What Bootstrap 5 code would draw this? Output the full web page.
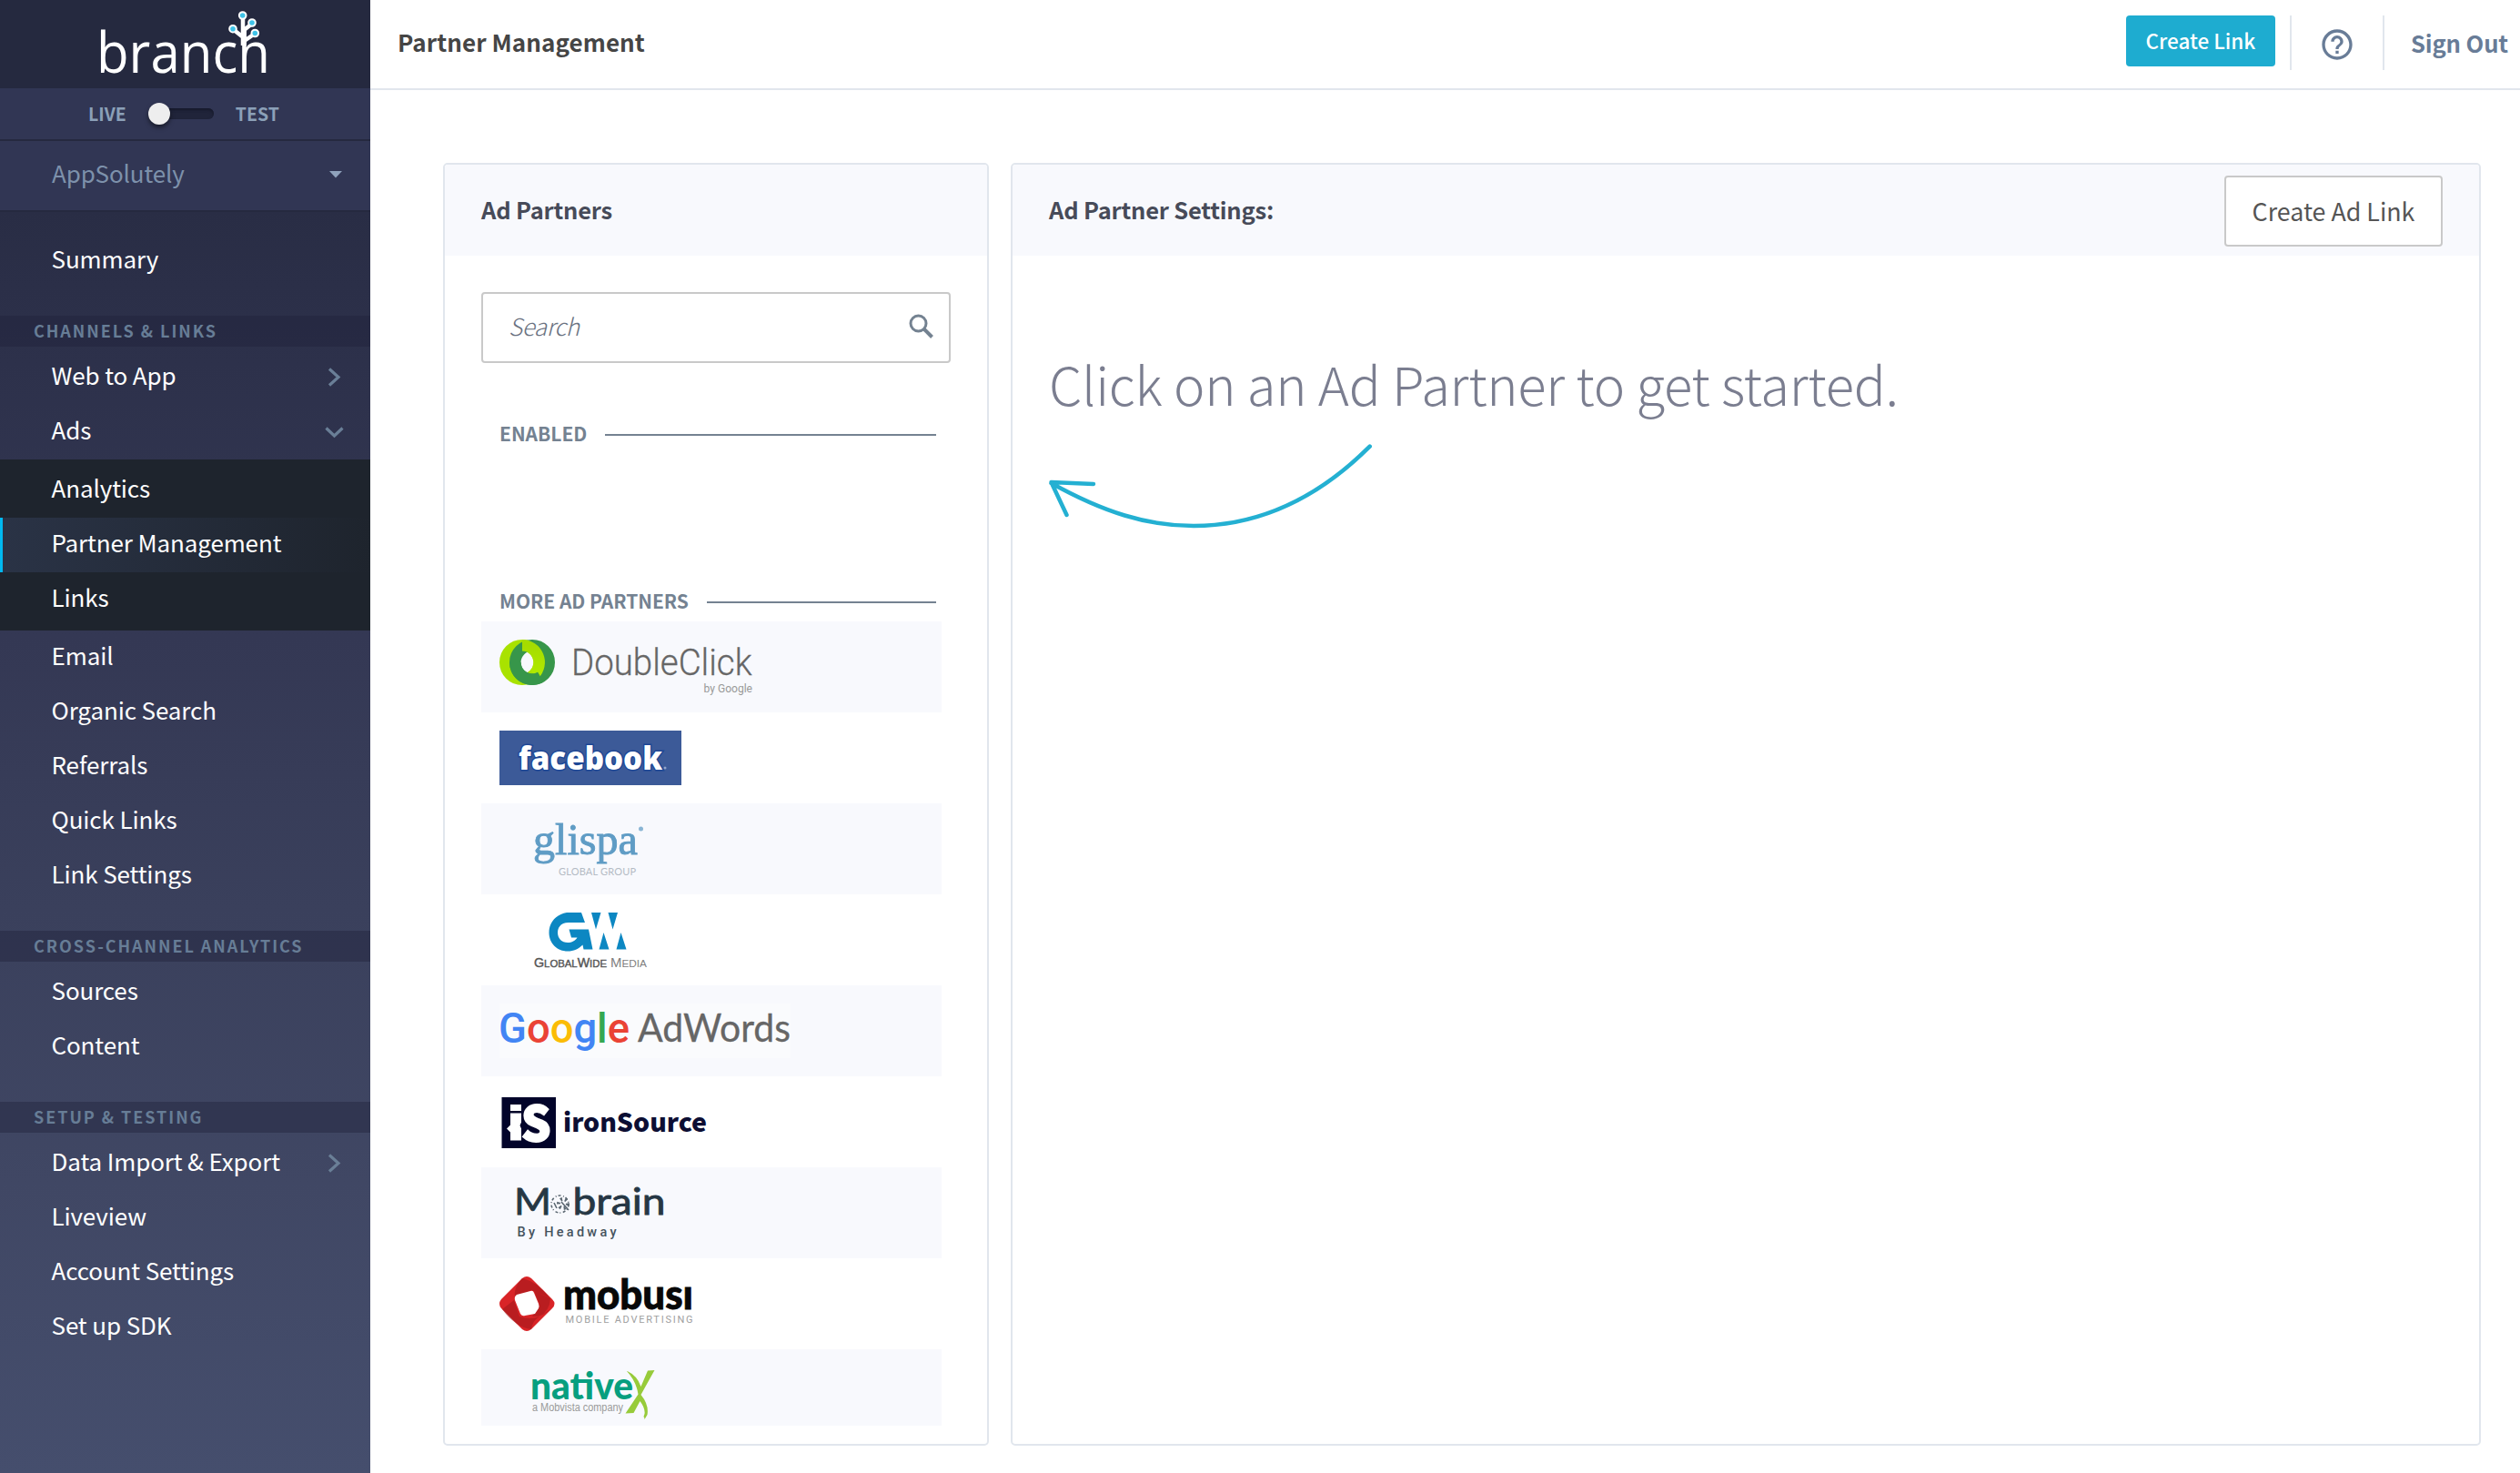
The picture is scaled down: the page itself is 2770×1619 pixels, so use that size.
<!DOCTYPE html>
<html lang="en">
<head>
<meta charset="utf-8">
<meta name="viewport" content="width=device-width, initial-scale=1">
<title>Partner Management</title>
<link href="https://cdn.jsdelivr.net/npm/bootstrap@5.3.0/dist/css/bootstrap.min.css" rel="stylesheet">
<script src="https://cdn.jsdelivr.net/npm/bootstrap@5.3.0/dist/js/bootstrap.bundle.min.js" defer></script>
<style>
body{font-family:"Noto Sans CJK SC","Open Sans",sans-serif;background:#fff;color:#454545;font-size:26px;min-height:1619px}
a{color:inherit;text-decoration:none}
svg{display:block;overflow:visible}
/* sidebar */
.sidebar{width:407px;height:1619px;background:linear-gradient(#25293f 0,#292d45 231px,#2d314b 400px,#343854 700px,#3a405c 1000px,#404764 1300px,#454e6d 1619px);color:#fff}
.brand-box{height:97px;background:#25293f}
.mode-row{height:58px;background:#313654;border-bottom:2px solid #25293f;color:#8ba0b8;font-size:19.5px;font-weight:700;padding-left:97px;line-height:55px}
.mode-switch{width:72px;height:12px;border-radius:6px;background:#20243a;box-shadow:inset 0 2px 3px #16192b;margin:22px 24px 0}
.mode-knob{width:24px;height:24px;border-radius:50%;background:#eee;margin-top:-6px;box-shadow:0 3px 5px rgba(0,0,0,.5)}
.app-row{height:78px;background:#313654;border-bottom:2px solid #25293f;color:#7d91ab;padding:0 31px 0 57px;line-height:70px;letter-spacing:-.15px}
.side-head{height:34px;background:rgba(32,34,58,.42);color:#677d96;font-size:18px;font-weight:700;letter-spacing:1.95px;padding-left:37px;line-height:32px}
.side-nav{padding:4px 0 30px}
.side-nav .nav-link{height:60px;line-height:54px;padding:0 30px 0 56.500px;color:#fff;display:flex;justify-content:space-between;letter-spacing:-.12px}
.side-nav .nav-link svg{margin-top:14px}
.nav-first{padding-top:24px}
.sub-nav{background:#1e242d;padding:4px 0}
.sub-nav .nav-link.active{background:linear-gradient(90deg,#2a3346,#1e242d);box-shadow:inset 3px 0 #00b9f1}
/* top bar */
.topbar{height:99px;border-bottom:2px solid #e1e6ed;padding:0 13px 0 30px}
.page-title{font-size:26px;font-weight:700;line-height:91px;letter-spacing:.08px;margin:0}
.btn-create{background:#1eacd0;color:#fff;width:164px;height:56px;border-radius:4px;font-size:22.5px;font-weight:500;line-height:50px;padding:0 0 3px;margin-top:17px}
.bar-rule{width:2px;height:60px;background:#e1e6ed;margin-top:17px}
.sign-out{color:#687c97;font-weight:700;font-size:25.6px;line-height:93px;letter-spacing:-.12px;padding-left:5px}
.help-icon{margin-top:29px}
/* panels */
.panels{padding:80px 43px 0 80px;gap:24px}
.panel{border:2px solid #e1e6ed;border-radius:5px;height:1410px;overflow:hidden;background:#fff}
.panel-left{width:600px}
.panel-head{background:#f8f9fd;height:100px;padding:0 40px;color:#474b59;font-weight:700;font-size:25.5px}
.panel-head span{line-height:97px;letter-spacing:-.2px}
.btn-ad{border:2px solid #c9c9c9;border-radius:4px;background:#fff;width:240px;height:78px;font-size:26.800px;color:#555;padding:0;line-height:70px;margin-top:12px}
.search-box{height:78px;border:2px solid #c9c9c9;border-radius:4px;margin:40px 40px 0;padding:0 14px 0 28px}
.search-box span{font-style:italic;font-weight:300;color:#6a7281;line-height:70px;letter-spacing:-.4px}
.search-box svg{margin-top:19px}
.group-head{color:#748291;font-size:21px;font-weight:700;height:32px;line-height:30px;padding:0 56px 0 60px;gap:20px}
.group-head i{height:2px;background:#748291;flex:1;margin-top:16px}
.group-head span{white-space:nowrap;letter-spacing:-.03px}
.group-on{margin-top:62px}
.group-more{margin-top:152px}
.partners{margin:6px 50px 0 40px;height:884px;overflow:hidden}
.partners .list-group-item{height:100px;border:0;border-radius:0;padding:20px 20px;background:#fff}
.partners .list-group-item:nth-child(odd){background:#f8f9fd}
.get-started{font-size:58px;font-weight:300;color:#7b7e90;letter-spacing:-.28px;line-height:84px;margin:98px 0 0 40px}
.hint-arrow{margin:22px 0 0 30px}
</style>
</head>
<body>
<div class="d-flex">
  <aside class="sidebar flex-shrink-0">
    <div class="brand-box">
      <svg width="407" height="97" viewBox="0 0 407 97">
        <text x="106" y="80" font-family="Open Sans" font-weight="400" font-size="62" fill="#fff" textLength="191" lengthAdjust="spacingAndGlyphs">branch</text>
        <g stroke="#fff" stroke-width="4.500" fill="none"><path d="M267 20V50M256 32l10 8M277 26l-10 8M280 37l-13 9"/></g>
        <g fill="#3fc3e8" stroke="#fff" stroke-width="2"><circle cx="266.700" cy="17" r="3.800"/><circle cx="277" cy="25" r="3.800"/><circle cx="256" cy="31.700" r="3.800"/><circle cx="280.300" cy="36.500" r="3.800"/></g>
      </svg>
    </div>
    <div class="mode-row d-flex"><span>LIVE</span><div class="mode-switch"><div class="mode-knob"></div></div><span>TEST</span></div>
    <div class="app-row d-flex justify-content-between"><span>AppSolutely</span><svg width="14" height="76" viewBox="0 0 14 76"><path d="M0 33h14l-7 7.500z" fill="#8fa2bc"/></svg></div>
    <nav class="side-nav nav-first nav flex-column flex-nowrap"><a class="nav-link" href="#">Summary</a></nav>
    <div class="side-head">CHANNELS &amp; LINKS</div>
    <nav class="side-nav nav flex-column flex-nowrap">
      <a class="nav-link" href="#">Web to App<svg width="20" height="30" viewBox="0 0 20 30"><path d="M5 6.500l10 9-10 9" fill="none" stroke="#6a7f97" stroke-width="3.200"/></svg></a>
      <a class="nav-link" href="#">Ads<svg width="20" height="30" viewBox="0 0 20 30"><path d="M1.500 11.500l9 8.500 9-8.500" fill="none" stroke="#6a7f97" stroke-width="3.200"/></svg></a>
      <div class="sub-nav">
        <a class="nav-link" href="#">Analytics</a>
        <a class="nav-link active" href="#">Partner Management</a>
        <a class="nav-link" href="#">Links</a>
      </div>
      <a class="nav-link" href="#">Email</a>
      <a class="nav-link" href="#">Organic Search</a>
      <a class="nav-link" href="#">Referrals</a>
      <a class="nav-link" href="#">Quick Links</a>
      <a class="nav-link" href="#">Link Settings</a>
    </nav>
    <div class="side-head">CROSS-CHANNEL ANALYTICS</div>
    <nav class="side-nav nav flex-column flex-nowrap">
      <a class="nav-link" href="#">Sources</a>
      <a class="nav-link" href="#">Content</a>
    </nav>
    <div class="side-head">SETUP &amp; TESTING</div>
    <nav class="side-nav nav flex-column flex-nowrap">
      <a class="nav-link" href="#">Data Import &amp; Export<svg width="20" height="30" viewBox="0 0 20 30"><path d="M5 6.500l10 9-10 9" fill="none" stroke="#6a7f97" stroke-width="3.200"/></svg></a>
      <a class="nav-link" href="#">Liveview</a>
      <a class="nav-link" href="#">Account Settings</a>
      <a class="nav-link" href="#">Set up SDK</a>
    </nav>
  </aside>

  <main class="flex-grow-1">
    <header class="topbar d-flex">
      <h1 class="page-title me-auto">Partner Management</h1>
      <button class="btn btn-create">Create Link</button>
      <div class="bar-rule ms-3 me-4"></div>
      <svg class="help-icon me-4" width="52" height="40" viewBox="-1 0 26 24" preserveAspectRatio="xMidYMid meet"><path fill="#687c97" d="M11 18h2v-2h-2v2zm1-16C6.480 2 2 6.480 2 12s4.480 10 10 10 10-4.480 10-10S17.520 2 12 2zm0 18c-4.410 0-8-3.590-8-8s3.590-8 8-8 8 3.590 8 8-3.590 8-8 8zm0-14c-2.210 0-4 1.790-4 4h2c0-1.100.9-2 2-2s2 .9 2 2c0 2-3 1.750-3 5h2c0-2.250 3-2.500 3-5 0-2.210-1.790-4-4-4z"/></svg>
      <div class="bar-rule me-4"></div>
      <a class="sign-out" href="#">Sign Out</a>
    </header>

    <div class="panels d-flex">
      <section class="panel panel-left flex-shrink-0">
        <div class="panel-head"><span>Ad Partners</span></div>
        <div class="search-box d-flex justify-content-between">
          <span>Search</span>
          <svg width="32" height="34" viewBox="0 0 32 34"><circle cx="12.500" cy="13.500" r="8.500" fill="none" stroke="#748291" stroke-width="3"/><path d="M18.500 19.500l9 9" stroke="#748291" stroke-width="4"/></svg>
        </div>
        <div class="group-head group-on d-flex"><span>ENABLED</span><i></i></div>
        <div class="group-head group-more d-flex"><span>MORE AD PARTNERS</span><i></i></div>
        <div class="partners list-group list-group-flush">
          <div class="list-group-item">
            <svg width="300" height="60" viewBox="0 0 300 60">
              <defs><linearGradient id="dcy" x1="0" y1="0" x2="0" y2="1"><stop offset="0" stop-color="#a5dc00"/><stop offset="1" stop-color="#b0ea00"/></linearGradient></defs>
              <circle cx="25" cy="25" r="18.700" fill="none" stroke="#a9e200" stroke-width="12.600"/>
              <circle cx="36" cy="25" r="18.700" fill="none" stroke="#37964a" stroke-width="12.600"/>
              <path d="M25 6.300A18.700 18.700 0 0 1 38.200 38.200" fill="none" stroke="url(#dcy)" stroke-width="12.600"/>
              <path d="M17.300 25A18.700 18.700 0 0 0 45.300 41.200" fill="none" stroke="#37964a" stroke-width="12.600"/>
              <text x="79" y="39" font-family="Roboto" font-weight="300" font-size="40" fill="#666" stroke="#666" stroke-width=".3" textLength="198.500" lengthAdjust="spacingAndGlyphs">DoubleClick</text>
              <text x="224.500" y="58" font-family="Roboto" font-weight="400" font-size="12.500" fill="#999" textLength="53.500" lengthAdjust="spacingAndGlyphs">by Google</text>
            </svg>
          </div>
          <div class="list-group-item">
            <svg width="300" height="60" viewBox="0 0 300 60">
              <path fill="#3c5a98" d="M0 0h200v60H0z"/>
              <text x="21" y="43" font-family="Open Sans" font-weight="800" font-size="34.500" fill="#fff" stroke="#1d4796" stroke-width="3" paint-order="stroke" textLength="158" lengthAdjust="spacingAndGlyphs">facebook</text>
              <circle cx="182" cy="41" r="1.500" fill="#8fa3cb"/>
            </svg>
          </div>
          <div class="list-group-item">
            <svg width="300" height="60" viewBox="0 0 300 60">
              <text x="37" y="35.500" font-family="Liberation Serif" font-size="49.500" fill="#5f9cc5" stroke="#5f9cc5" stroke-width=".9" textLength="115" lengthAdjust="spacingAndGlyphs">glispa</text>
              <circle cx="155.500" cy="8" r="2.500" fill="#8ab5d4"/>
              <text x="65" y="58.500" font-family="Lato" font-size="11" fill="#b4bbc4" textLength="85" lengthAdjust="spacing">GLOBAL GROUP</text>
            </svg>
          </div>
          <div class="list-group-item">
            <svg width="300" height="60" viewBox="0 0 300 60">
              <g fill="#0c87c2">
                <path d="M90 0H74C62 2 54.500 11 54.500 22c0 12 9 20.500 20.500 20.500 6.500 0 12-2.500 16.500-7l1 5h10L98 18.500H76.500l2.500 9h6.500c-2 3.500-6 5.500-10.500 5.500-6.500 0-11-4.500-11-11 0-6.800 4.500-11 12-11H94z"/>
                <path d="M101 0h10.500l-5.500 18.500zM119.500 0H130l-5.500 18.500zM114.500 22l6 18.500h-11zM133.500 22l6 18.500h-11z"/>
              </g>
              <text x="38" y="59.500" font-family="Liberation Sans" font-size="14.500" fill="#555" stroke="#555" stroke-width=".4" textLength="80" lengthAdjust="spacingAndGlyphs">G<tspan font-size="11.500">LOBAL</tspan>W<tspan font-size="11.500">IDE</tspan></text>
              <text x="122" y="59.500" font-family="Liberation Sans" font-size="14.500" fill="#808080" textLength="40" lengthAdjust="spacingAndGlyphs">M<tspan font-size="11.500">EDIA</tspan></text>
            </svg>
          </div>
          <div class="list-group-item">
            <svg width="320" height="60" viewBox="0 0 320 60">
              <path fill="#fafbfd" d="M0 0h320v60H0z"/>
              <text x="-1" y="42.500" font-family="Roboto" font-size="47" font-weight="500" textLength="144" lengthAdjust="spacingAndGlyphs"><tspan fill="#4285f4">G</tspan><tspan fill="#ea4335">o</tspan><tspan fill="#fbbc05">o</tspan><tspan fill="#4285f4">g</tspan><tspan fill="#34a853">l</tspan><tspan fill="#ea4335">e</tspan></text>
              <text x="152" y="42" font-family="Lato" font-size="43" fill="#666" stroke="#666" stroke-width=".3" textLength="168" lengthAdjust="spacingAndGlyphs">AdWords</text>
            </svg>
          </div>
          <div class="list-group-item">
            <svg width="300" height="60" viewBox="0 0 300 60">
              <path fill="#02042a" d="M2.500 3h59.500v56h-59.500z"/>
              <path fill="#fff" d="M12 11h12v7H12zM12 20.500h12v10l-1.500 3.500 1.500 3.500v13H12v-9l-4-4 4-4z"/>
              <text x="24" y="50.500" font-family="Noto Sans CJK SC" font-size="53" font-weight="900" fill="#fff" stroke="#fff" stroke-width="2" textLength="32.500" lengthAdjust="spacingAndGlyphs">S</text>
              <text x="70" y="41" font-family="Noto Sans CJK SC" font-size="28.500" font-weight="900" fill="#0c0e33" textLength="158" lengthAdjust="spacingAndGlyphs">ironSource</text>
            </svg>
          </div>
          <div class="list-group-item">
            <svg width="300" height="60" viewBox="0 0 300 60">
              <g font-family="Lato" fill="#263744" stroke="#263744" stroke-width=".8">
                <text x="16" y="31.500" font-size="40.500" textLength="41" lengthAdjust="spacingAndGlyphs">M</text>
                <text x="80.500" y="31.500" font-size="40.500" textLength="102" lengthAdjust="spacingAndGlyphs">brain</text>
              </g>
              <g fill="none" stroke="#5c6872" stroke-width="1.600"><circle cx="66.500" cy="20.500" r="9.500" stroke-dasharray="3 2.500 1 2"/><circle cx="70" cy="20" r="5" stroke-dasharray="2 3" stroke-width="4"/><path d="M68 18l8 9M60 19l3 6"/></g>
              <text x="19.500" y="56" font-family="Roboto" font-weight="500" font-size="14.500" fill="#46535e" textLength="109" lengthAdjust="spacing">By Headway</text>
            </svg>
          </div>
          <div class="list-group-item">
            <svg width="300" height="60" viewBox="0 0 300 60">
              <path fill="#d92427" d="M25 2q5-4 10 0L58 25q5 5 0 10L35 58q-5 4-10 0L2 35q-4-5 0-10z"/>
              <path fill="#a3191d" d="M25 2Q15 12 17 24l18-9 20 8Q42 6 25 2zM58 35Q47 45 36 44l8-13L38 16l18 8q-1 14-12 20zM35 58Q18 56 3 36l13-10 6 18q12 4 22 0-8 5-9 14z" opacity=".6"/>
              <path fill="#fff" d="M19 20l15-4q3-1 4 2l5 12q1 3 0 5l-4 6-11 2q-3 1-5-2l-6-15q-1-4 2-6z"/>
              <text x="70" y="36" font-family="Lato" font-weight="900" font-size="45" fill="#080808" stroke="#080808" stroke-width=".8" textLength="143" lengthAdjust="spacingAndGlyphs">mobusı</text>
              <text x="72.500" y="51" font-family="Roboto" font-size="11" fill="#a0a0a0" textLength="140" lengthAdjust="spacing">MOBILE ADVERTISING</text>
            </svg>
          </div>
          <div class="list-group-item">
            <svg width="300" height="60" viewBox="0 0 300 60">
              <text x="34" y="35" font-family="Lato" font-weight="900" font-size="42" fill="#079f7f" textLength="113" lengthAdjust="spacingAndGlyphs">native</text>
              <path fill="#97cb3a" d="M140.500 4q11 5 15 17L163 3.500l7.500-.5-15 27q9 11 7 22l-3 5q0-2-1-3l1-3q1-6-5-14l-7 13-9 .5 14-21q-2-14-12.500-25.500z"/>
              <text x="36" y="48" font-family="Liberation Sans" font-size="12" fill="#999" textLength="100" lengthAdjust="spacingAndGlyphs">a Mobvista company</text>
            </svg>
          </div>
        </div>
      </section>

      <section class="panel flex-grow-1">
        <div class="panel-head d-flex justify-content-between"><span>Ad Partner Settings:</span><button class="btn btn-ad">Create Ad Link</button></div>
        <div class="get-started">Click on an Ad Partner to get started.</div>
        <svg class="hint-arrow" width="380" height="110" viewBox="0 0 380 110"><path d="M12.500 46C70 78 118 93 169 93S290 78 362.700 5.700M59 47L12.500 45 29.500 81" fill="none" stroke="#24b0d2" stroke-width="4.500" stroke-linecap="round" stroke-linejoin="round"/></svg>
      </section>
    </div>
  </main>
</div>
</body>
</html>
